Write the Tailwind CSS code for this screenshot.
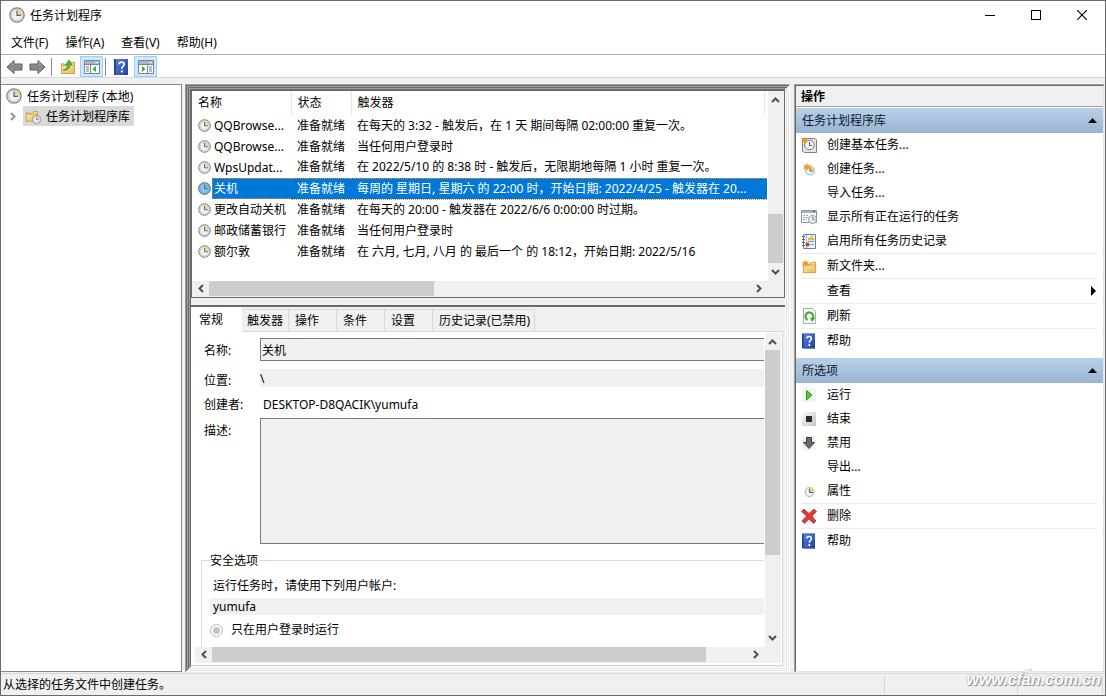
<!DOCTYPE html>
<html lang="zh-CN">
<head>
    <meta charset="UTF-8">
    <meta name="viewport" content="width=device-width, initial-scale=1.0">
    <title>任务计划程序</title>
    <script src="https://cdn.jsdelivr.net/npm/@tailwindcss/browser@4"></script>
</head>
<body class="h-screen overflow-hidden bg-[#f0f0f0] font-['Noto_Sans','Noto_Sans_CJK_SC',sans-serif] text-xs text-black">

    <!-- 公用图标 -->
    <svg class="absolute size-0">
        <defs>
            <linearGradient id="folderFill" x1="0" y1="0" x2="1" y2="1">
                <stop offset="0" stop-color="#fbe9ac"/><stop offset="1" stop-color="#e6b95c"/>
            </linearGradient>
            <linearGradient id="helpFill" x1="0" y1="0" x2="1" y2="1">
                <stop offset="0" stop-color="#5b7fd6"/><stop offset="1" stop-color="#1f3f9e"/>
            </linearGradient>
            <linearGradient id="arrowFill" x1="0" y1="0" x2="0" y2="1">
                <stop offset="0" stop-color="#b0b0b0"/><stop offset="0.5" stop-color="#858585"/><stop offset="1" stop-color="#a0a0a0"/>
            </linearGradient>
            <linearGradient id="stopFill" x1="0" y1="0" x2="1" y2="1">
                <stop offset="0" stop-color="#fafafa"/><stop offset="1" stop-color="#c4c4c4"/>
            </linearGradient>
        </defs>
        <symbol id="clock" viewBox="0 0 16 16">
            <circle cx="8" cy="8" r="7.2" fill="#dcdee0" stroke="#808488" stroke-width="1.2"/>
            <circle cx="8" cy="8" r="5.4" fill="#eef3f7" stroke="#b3b8bd" stroke-width="0.6"/>
            <path d="M8 8V2.600A5.400 5.400 0 0 1 13.400 8z" fill="#f4d48a"/>
            <path d="M8 3.600V8.400H12" fill="none" stroke="#5a6672" stroke-width="1.2"/>
        </symbol>
        <symbol id="back" viewBox="0 0 17 16">
            <path d="M1 8L8 1.500V5H16V11H8V14.500z" fill="url(#arrowFill)" stroke="#5a5a5a" stroke-linejoin="round"/>
        </symbol>
        <symbol id="help" viewBox="0 0 14 16">
            <rect width="14" height="16" fill="#24459f"/>
            <rect x="2" y="0" width="12" height="16" fill="url(#helpFill)"/>
            <path d="M5.200 5.300C5.200 2.400 10.200 2.400 10.200 5.300C10.200 7.200 7.800 7.300 7.800 10" fill="none" stroke="#fff" stroke-width="1.6"/>
            <rect x="6.900" y="11.400" width="2" height="2" fill="#fff"/>
        </symbol>
        <symbol id="folder" viewBox="0 0 16 16">
            <path d="M1.500 4.500V14.500H14.500V3.500H9.500L8.500 5.500H5.500z" fill="#f5dc93" stroke="#c99b43"/>
            <path d="M1.500 6.500H14.500V14.500H1.500z" fill="url(#folderFill)" stroke="#d0a652"/>
        </symbol>
        <symbol id="spark" viewBox="0 0 8 8">
            <path d="M4 0L5 2.400L8 1.400L6.400 4L8 6.400L5.200 5.600L4 8L3 5.600L0 6.400L1.600 4L0 1.400L3 2.400z" fill="#f39a1c"/>
        </symbol>
        <symbol id="up" viewBox="0 0 9 6"><path d="M1 5L4.500 1.500L8 5" fill="none" stroke="#505050" stroke-width="2"/></symbol>
        <symbol id="down" viewBox="0 0 9 6"><path d="M1 1L4.500 4.500L8 1" fill="none" stroke="#505050" stroke-width="2"/></symbol>
        <symbol id="left" viewBox="0 0 6 9"><path d="M5 1L1.500 4.500L5 8" fill="none" stroke="#505050" stroke-width="2"/></symbol>
        <symbol id="right" viewBox="0 0 6 9"><path d="M1 1L4.500 4.500L1 8" fill="none" stroke="#505050" stroke-width="2"/></symbol>
    </svg>

    <div class="flex h-full flex-col border border-[#6b696b]">
        <!-- 标题栏 -->
        <header class="flex h-7 shrink-0 items-center bg-white pl-2">
            <svg class="size-4"><use href="#clock"/></svg>
            <h1 class="ml-1 flex-1 pt-[2px] pl-px">任务计划程序</h1>
            <button aria-label="最小化" class="flex h-7 w-[46px] items-center justify-center">
                <svg class="size-[10px]" viewBox="0 0 10 10"><path d="M0 5.500H10" stroke="#000"/></svg>
            </button>
            <button aria-label="最大化" class="flex h-7 w-[46px] items-center justify-center">
                <svg class="size-[10px]" viewBox="0 0 10 10"><rect x="0.500" y="0.500" width="9" height="9" fill="none" stroke="#000"/></svg>
            </button>
            <button aria-label="关闭" class="flex h-7 w-[46px] items-center justify-center">
                <svg class="size-[10px]" viewBox="0 0 10 10"><path d="M0 0L10 10M10 0L0 10" stroke="#000" stroke-width="1.1"/></svg>
            </button>
        </header>

        <!-- 菜单栏 -->
        <nav class="flex h-[26px] shrink-0 items-center gap-[17px] border-b border-[#b0b0b0] bg-white pt-[2px] pl-[10px]">
            <button>文件(F)</button>
            <button>操作(A)</button>
            <button>查看(V)</button>
            <button>帮助(H)</button>
        </nav>

        <!-- 工具栏 -->
        <div class="flex h-[23px] shrink-0 items-center border-b border-[#d9d9d9] bg-white pt-px pl-[5px]">
            <button aria-label="后退"><svg class="h-4 w-[17px]"><use href="#back"/></svg></button>
            <button aria-label="前进" class="ml-[6px]"><svg class="h-4 w-[17px] -scale-x-100"><use href="#back"/></svg></button>
            <span class="ml-[5px] h-[18px] w-px bg-[#8c8c8c]"></span>
            <button aria-label="向上一级" class="ml-2">
                <svg class="size-4" viewBox="0 0 16 16">
                    <use href="#folder" width="16" height="16"/>
                    <path d="M3 11C6.500 10.500 7.500 8.500 7.500 5.500H5.500L9 1L12 5.500H10C10 9.500 7 12 3 11z" fill="#4cc02f" stroke="#2c8f18" stroke-width="0.6"/>
                </svg>
            </button>
            <button aria-label="显示/隐藏控制台树" aria-pressed="true" class="ml-1 flex h-[21px] w-[23px] items-center justify-center border border-[#99d1ff] bg-[#cce8ff]">
                <svg class="h-[14px] w-4" viewBox="0 0 16 14">
                    <path d="M0.500 0.500H15.500V13.500H0.500z" fill="#fff" stroke="#7b8794"/>
                    <path d="M1 1H15V4H1z" fill="#a9b4c0"/><path d="M0.500 4.500H15.500M6.500 5V13" stroke="#7b8794"/>
                    <path d="M11 2.500H14" stroke="#fff"/>
                    <path d="M2 7H5M2 9H5M2 11H5" stroke="#5c80b5"/>
                    <path d="M12 6V12L8.500 9z" fill="#36b01f"/>
                </svg>
            </button>
            <span class="ml-[2px] h-[18px] w-px bg-[#8c8c8c]"></span>
            <button aria-label="帮助" class="ml-2"><svg class="h-4 w-[14px]"><use href="#help"/></svg></button>
            <button aria-label="显示/隐藏操作窗格" aria-pressed="true" class="ml-[6px] flex h-[21px] w-[23px] items-center justify-center border border-[#99d1ff] bg-[#cce8ff]">
                <svg class="h-[14px] w-4" viewBox="0 0 16 14">
                    <path d="M0.500 0.500H15.500V13.500H0.500z" fill="#fff" stroke="#7b8794"/>
                    <path d="M1 1H15V4H1z" fill="#a9b4c0"/><path d="M0.500 4.500H15.500M9.500 5V13" stroke="#7b8794"/>
                    <path d="M11 2.500H14" stroke="#fff"/>
                    <path d="M11 7H14M11 9H14M11 11H14" stroke="#5c80b5"/>
                    <path d="M4 6V12L7.500 9z" fill="#36b01f"/>
                </svg>
            </button>
        </div>

        <!-- 主区域 -->
        <main class="flex min-h-0 flex-1 pt-[6px] pr-px">
            <!-- 控制台树 -->
            <aside class="w-[181px] shrink-0 border border-l-0 border-[#828790] bg-white pt-px">
                <div class="flex h-5 items-center pl-[5px]">
                    <svg class="size-4"><use href="#clock"/></svg>
                    <span class="ml-[5px] pt-px">任务计划程序 (本地)</span>
                </div>
                <div class="flex h-5 items-center pl-[9px]">
                    <svg class="h-[9px] w-[6px] opacity-60"><use href="#right"/></svg>
                    <a href="#" class="ml-[7px] flex h-5 items-center bg-[#d9d9d9] pr-1 pl-[2px]">
                        <svg class="size-4" viewBox="0 0 16 16">
                            <use href="#folder" width="14" height="15"/>
                            <use href="#clock" x="7" y="7" width="9" height="9"/>
                        </svg>
                        <span class="ml-[5px] pt-px">任务计划程序库</span>
                    </a>
                </div>
            </aside>

            <!-- 中间窗格 -->
            <section class="ml-[3px] flex min-w-0 flex-1 flex-col p-[6px] pr-[5px] shadow-[inset_1px_1px_#a0a0a0,inset_-1px_-1px_#ffffff,inset_2px_2px_#696969,inset_-2px_-2px_#e3e3e3,inset_3px_3px_#a0a0a0,inset_-3px_-3px_#ffffff,inset_4px_4px_#696969,inset_-4px_-4px_#e3e3e3,inset_5px_5px_#a0a0a0,inset_-5px_-5px_#ffffff,inset_6px_6px_#696969]">
                <!-- 任务列表 -->
                <div class="flex h-52 shrink-0 flex-col border border-[#696969] bg-[#f0f0f0]">
                    <div class="flex min-h-0 flex-1">
                        <div class="min-w-0 flex-1 bg-white pr-px">
                            <table class="w-full table-fixed border-collapse text-left">
                                <thead>
                                    <tr class="h-6">
                                        <th class="w-[99px] border-r border-[#e5e5e5] p-0 pl-[6px] font-normal">名称</th>
                                        <th class="w-[60px] border-r border-[#e5e5e5] p-0 pl-[6px] font-normal">状态</th>
                                        <th class="p-0 pl-[6px] font-normal">触发器</th>
                                        <th class="w-[3px] border-l border-[#e5e5e5] p-0"></th>
                                    </tr>
                                </thead>
                                <tbody class="whitespace-nowrap">
                                    <tr class="h-[21px]">
                                        <td class="p-0 pl-[6px]"><span class="flex items-center gap-[3px]"><svg class="size-[13px] shrink-0"><use href="#clock"/></svg>QQBrowse...</span></td>
                                        <td class="p-0 pl-[6px]">准备就绪</td>
                                        <td colspan="2" class="p-0 pl-[6px]">在每天的 3:32 - 触发后，在 1 天 期间每隔 02:00:00 重复一次。</td>
                                    </tr>
                                    <tr class="h-[21px]">
                                        <td class="p-0 pl-[6px]"><span class="flex items-center gap-[3px]"><svg class="size-[13px] shrink-0"><use href="#clock"/></svg>QQBrowse...</span></td>
                                        <td class="p-0 pl-[6px]">准备就绪</td>
                                        <td colspan="2" class="p-0 pl-[6px]">当任何用户登录时</td>
                                    </tr>
                                    <tr class="h-[21px]">
                                        <td class="p-0 pl-[6px]"><span class="flex items-center gap-[3px]"><svg class="size-[13px] shrink-0"><use href="#clock"/></svg>WpsUpdat...</span></td>
                                        <td class="p-0 pl-[6px]">准备就绪</td>
                                        <td colspan="2" class="p-0 pl-[6px]">在 2022/5/10 的 8:38 时 - 触发后，无限期地每隔 1 小时 重复一次。</td>
                                    </tr>
                                    <tr class="h-[21px] text-white" aria-selected="true">
                                        <td class="p-0 pl-[6px]">
                                            <span class="flex items-center gap-px">
                                                <svg class="size-[13px] shrink-0" viewBox="0 0 16 16"><use href="#clock"/><circle cx="8" cy="8" r="8" fill="#0078d7" fill-opacity="0.4"/></svg>
                                                <span class="flex h-[21px] flex-1 items-center border-y border-l border-dotted border-[#ff8728] bg-[#0078d7] pl-px">关机</span>
                                            </span>
                                        </td>
                                        <td class="border-y border-dotted border-[#ff8728] bg-[#0078d7] p-0 pl-[6px]">准备就绪</td>
                                        <td colspan="2" class="border-y border-dotted border-[#ff8728] bg-[#0078d7] p-0 pl-[6px]">每周的 星期日, 星期六 的 22:00 时，开始日期: 2022/4/25 - 触发器在 20...</td>
                                    </tr>
                                    <tr class="h-[21px]">
                                        <td class="p-0 pl-[6px]"><span class="flex items-center gap-[3px]"><svg class="size-[13px] shrink-0"><use href="#clock"/></svg>更改自动关机</span></td>
                                        <td class="p-0 pl-[6px]">准备就绪</td>
                                        <td colspan="2" class="p-0 pl-[6px]">在每天的 20:00 - 触发器在 2022/6/6 0:00:00 时过期。</td>
                                    </tr>
                                    <tr class="h-[21px]">
                                        <td class="p-0 pl-[6px]"><span class="flex items-center gap-[3px]"><svg class="size-[13px] shrink-0"><use href="#clock"/></svg>邮政储蓄银行</span></td>
                                        <td class="p-0 pl-[6px]">准备就绪</td>
                                        <td colspan="2" class="p-0 pl-[6px]">当任何用户登录时</td>
                                    </tr>
                                    <tr class="h-[21px]">
                                        <td class="p-0 pl-[6px]"><span class="flex items-center gap-[3px]"><svg class="size-[13px] shrink-0"><use href="#clock"/></svg>额尔敦</span></td>
                                        <td class="p-0 pl-[6px]">准备就绪</td>
                                        <td colspan="2" class="p-0 pl-[6px]">在 六月, 七月, 八月 的 最后一个 的 18:12，开始日期: 2022/5/16</td>
                                    </tr>
                                </tbody>
                            </table>
                        </div>
                        <div class="flex w-4 shrink-0 flex-col pr-px">
                            <button aria-label="向上滚动" class="flex h-[18px] items-center justify-center"><svg class="h-[6px] w-[9px]"><use href="#up"/></svg></button>
                            <div class="flex flex-1 flex-col justify-end"><div class="h-[49px] bg-[#cdcdcd]"></div></div>
                            <button aria-label="向下滚动" class="flex h-[18px] items-center justify-center"><svg class="h-[6px] w-[9px]"><use href="#down"/></svg></button>
                        </div>
                    </div>
                    <div class="flex h-4 shrink-0 pr-4 pb-px">
                        <button aria-label="向左滚动" class="flex w-[17px] items-center justify-center"><svg class="h-[9px] w-[6px]"><use href="#left"/></svg></button>
                        <div class="flex-1"><div class="h-full w-[225px] bg-[#cdcdcd]"></div></div>
                        <button aria-label="向右滚动" class="flex w-[18px] items-center justify-center"><svg class="h-[9px] w-[6px]"><use href="#right"/></svg></button>
                    </div>
                </div>

                <!-- 任务详情 -->
                <div class="mt-[7px] flex min-h-0 flex-1 flex-col border-t-2 border-[#696969] bg-[#f0f0f0]">
                    <div role="tablist" class="flex h-[25px] shrink-0 items-end border-b border-[#d9d9d9]">
                        <button role="tab" aria-selected="true" class="-mb-px h-[25px] w-[51px] bg-white pr-[10px] pl-2 text-left">常规</button>
                        <button role="tab" class="h-[22px] w-[47px] border-t border-r border-[#d9d9d9] pt-px">触发器</button>
                        <button role="tab" class="h-[22px] w-12 border-t border-r border-[#d9d9d9] pt-px pl-[6px] text-left">操作</button>
                        <button role="tab" class="h-[22px] w-12 border-t border-r border-[#d9d9d9] pt-px pl-[6px] text-left">条件</button>
                        <button role="tab" class="h-[22px] w-12 border-t border-r border-[#d9d9d9] pt-px pl-[6px] text-left">设置</button>
                        <button role="tab" class="h-[22px] border-t border-r border-[#d9d9d9] pt-px pr-1 pl-[6px]">历史记录(已禁用)</button>
                    </div>
                    <div class="mr-[2px] flex min-h-0 flex-1 flex-col border-r border-b border-[#d9d9d9] bg-white pt-px pr-px pb-[2px] pl-[4px]">
                        <div class="flex min-h-0 flex-1">
                            <!-- 常规 -->
                            <form class="min-w-0 flex-1 overflow-hidden pt-[5px]">
                                <div class="grid grid-cols-[56px_1fr] pl-[9px]">
                                    <label for="task-name" class="pt-[5px]">名称:</label>
                                    <input id="task-name" readonly value="关机" class="mb-2 h-[23px] w-full border border-r-0 border-[#7a7a7a] bg-[#f0f0f0] px-px outline-none">
                                    <label for="task-path" class="pt-1">位置:</label>
                                    <input id="task-path" readonly value="\" class="mb-2 h-[18px] w-full bg-[#f0f0f0] outline-none">
                                    <label for="task-author" class="pt-[2px]">创建者:</label>
                                    <input id="task-author" readonly value="DESKTOP-D8QACIK\yumufa" class="mb-[5px] h-[18px] w-full bg-white px-[3px] outline-none">
                                    <label for="task-desc" class="pt-[5px]">描述:</label>
                                    <textarea id="task-desc" readonly class="block h-[126px] w-full resize-none border border-r-0 border-[#7a7a7a] bg-[#f0f0f0] outline-none"></textarea>
                                </div>
                                <fieldset class="mt-[7px] ml-[6px] h-40 border border-r-0 border-[#dcdcdc] pl-2">
                                    <legend class="h-[18px] pt-px pr-[2px] leading-[18px]">安全选项</legend>
                                    <label for="task-user" class="mt-2 block h-[18px] pl-[3px] leading-[18px]">运行任务时，请使用下列用户帐户:</label>
                                    <input id="task-user" readonly value="yumufa" class="mt-[3px] block h-[17px] w-full bg-[#f0f0f0] pl-[3px] outline-none">
                                    <label class="mt-[6px] flex h-[18px] items-center gap-2">
                                        <input type="radio" checked disabled class="size-[13px] appearance-none rounded-full border border-[#c3c3c3] bg-[#c3c3c3] shadow-[inset_0_0_0_2px_#ffffff]">
                                        只在用户登录时运行
                                    </label>
                                </fieldset>
                            </form>
                            <div class="ml-px flex w-4 shrink-0 flex-col bg-[#f0f0f0] pr-px">
                                <button aria-label="向上滚动" class="flex h-[17px] items-center justify-center"><svg class="h-[6px] w-[9px]"><use href="#up"/></svg></button>
                                <div class="flex-1"><div class="h-[205px] bg-[#cdcdcd]"></div></div>
                                <button aria-label="向下滚动" class="flex h-[18px] items-center justify-center"><svg class="h-[6px] w-[9px]"><use href="#down"/></svg></button>
                            </div>
                        </div>
                        <div class="flex h-4 shrink-0 bg-[#f0f0f0] pr-4 pb-px">
                            <button aria-label="向左滚动" class="flex w-[17px] items-center justify-center"><svg class="h-[9px] w-[6px]"><use href="#left"/></svg></button>
                            <div class="flex-1 pr-[41px]"><div class="h-full bg-[#cdcdcd]"></div></div>
                            <button aria-label="向右滚动" class="flex w-[18px] items-center justify-center"><svg class="h-[9px] w-[6px]"><use href="#right"/></svg></button>
                        </div>
                    </div>
                </div>
            </section>

            <!-- 操作窗格 -->
            <aside class="ml-1 w-[310px] shrink-0 border-t border-l border-[#a0a0a0]">
                <div class="h-full border border-t-[#696969] border-r-[#e3e3e3] border-b-[#e3e3e3] border-l-[#696969] bg-white">
                    <h2 class="flex h-[21px] items-center border-b border-[#a0a0a0] bg-[#f0f0f0] pt-px pl-[5px] font-bold">操作</h2>
                    <button class="mt-px flex h-[25px] w-full items-center justify-between bg-linear-to-b from-[#b9d1ea] to-[#99b4d1] px-[6px] text-[#0c1a2b]">
                        任务计划程序库
                        <svg class="h-[5px] w-[9px]" viewBox="0 0 9 5"><path d="M0 5L4.500 0L9 5z" fill="#000"/></svg>
                    </button>
                    <ul class="px-[5px] [&_button]:flex [&_button]:h-6 [&_button]:w-full [&_button]:items-center [&_button]:gap-[10px] [&_svg]:size-4 [&_li]:border-[#ececec]">
                        <li><button>
                            <svg viewBox="0 0 16 16"><path d="M1.500 1.500H14L15.500 3V15.500H3L1.500 14z" fill="#e9e4e0" stroke="#8a7c74"/><circle cx="8.500" cy="8" r="4.800" fill="#eef5fa" stroke="#6f7f8c"/><path d="M8.500 5V8.500H11" fill="none" stroke="#44566a"/><use href="#spark" width="7" height="7"/></svg>
                            创建基本任务...
                        </button></li>
                        <li><button>
                            <svg viewBox="0 0 16 16"><circle cx="9" cy="9.500" r="4.500" fill="#edf4f9" stroke="#9db0c0"/><path d="M9 9.500V5A4.500 4.500 0 0 1 13.500 9.500z" fill="#f5cd78"/><path d="M9 6.500V10H12" fill="none" stroke="#3e5f80"/><use href="#spark" x="2" y="2" width="8" height="8"/></svg>
                            创建任务...
                        </button></li>
                        <li><button><svg></svg>导入任务...</button></li>
                        <li><button>
                            <svg viewBox="0 0 16 16"><path d="M0.500 1.500H15.500V13.500H0.500z" fill="#fff" stroke="#8a949e"/><path d="M1 2H15V4H1z" fill="#a9b4c0"/><path d="M12 2.500H14" stroke="#34506e"/><path d="M2 6.500H8M2 8.500H7M2 10.500H6" stroke="#9aa4ae" stroke-dasharray="2 1"/><use href="#clock" x="7" y="6" width="9" height="9"/></svg>
                            显示所有正在运行的任务
                        </button></li>
                        <li><button>
                            <svg viewBox="0 0 16 16"><path d="M2.500 1.500H14.500V15.500H2.500z" fill="#eef4fb" stroke="#5d83b5"/><path d="M5.500 2V15" stroke="#9cb7d8"/><path d="M7 5.500H13M7 8.500H13M9 11.500H13" stroke="#7f9cc0"/><path d="M1 3.500H4M1 6.500H4M1 9.500H4M1 12.500H4" stroke="#666"/><path d="M10.500 2.500L13.500 7H7.500z" fill="#f6c52b" stroke="#e0a818" stroke-width="0.5"/><circle cx="6.500" cy="11.500" r="2" fill="#d8352a"/></svg>
                            启用所有任务历史记录
                        </button></li>
                        <li class="border-t"><button>
                            <svg viewBox="0 0 16 16"><use href="#folder" x="1" y="1" width="15" height="15"/><use href="#spark" x="1" y="2" width="7" height="7"/></svg>
                            新文件夹...
                        </button></li>
                        <li class="border-t"><button>
                            <svg></svg><span class="flex-1 text-left">查看</span>
                            <svg viewBox="0 0 16 16"><path d="M9 3L14 8L9 13z"/></svg>
                        </button></li>
                        <li class="border-t"><button>
                            <svg viewBox="0 0 16 16"><path d="M2.500 0.500H11.500L14.500 3.500V15.500H2.500z" fill="#f7f9fb" stroke="#a3abb3"/><path d="M6.500 12A4 4 0 1 1 11.500 11" fill="none" stroke="#35ad27" stroke-width="2"/><path d="M9 9.500L14 10L11 14z" fill="#35ad27"/></svg>
                            刷新
                        </button></li>
                        <li class="border-t"><button><svg viewBox="0 0 16 16"><use href="#help" x="1" width="13" height="16"/></svg>帮助</button></li>
                    </ul>
                    <button class="mt-[5px] flex h-[25px] w-full items-center justify-between bg-linear-to-b from-[#b9d1ea] to-[#99b4d1] px-[6px] text-[#0c1a2b]">
                        所选项
                        <svg class="h-[5px] w-[9px]" viewBox="0 0 9 5"><path d="M0 5L4.500 0L9 5z" fill="#000"/></svg>
                    </button>
                    <ul class="px-[5px] [&_button]:flex [&_button]:h-6 [&_button]:w-full [&_button]:items-center [&_button]:gap-[10px] [&_svg]:size-4 [&_li]:border-[#ececec]">
                        <li><button>
                            <svg viewBox="0 0 16 16"><path d="M1 1H15V15H1z" fill="#f4f4f4"/><path d="M5.500 3.500L11 8L5.500 13z" fill="#4fc832" stroke="#2b9a1c"/></svg>
                            运行
                        </button></li>
                        <li><button>
                            <svg viewBox="0 0 16 16"><path d="M1 1H15V15H1z" fill="url(#stopFill)"/><path d="M5 5H11V11H5z" fill="#2b2b2b"/></svg>
                            结束
                        </button></li>
                        <li><button>
                            <svg viewBox="0 0 16 16"><path d="M1 1H15V15H1z" fill="#f4f4f4"/><path d="M5.500 2.500H10.500V7.500H13.500L8 13.500L2.500 7.500H5.500z" fill="#6a6a6a" stroke="#3b3b3b" stroke-linejoin="round"/></svg>
                            禁用
                        </button></li>
                        <li><button><svg></svg>导出...</button></li>
                        <li><button>
                            <svg viewBox="0 0 16 16"><circle cx="8.500" cy="9" r="4.500" fill="#edf4f9" stroke="#9db0c0"/><path d="M8.500 9V4.500A4.500 4.500 0 0 1 13 9z" fill="#f5cd78"/><path d="M8.500 6V9.500H12" fill="none" stroke="#3e5f80"/></svg>
                            属性
                        </button></li>
                        <li class="border-t"><button>
                            <svg viewBox="0 0 16 16"><path d="M3 1L8 5.500L13 1L15.500 3.500L11 8L15 13L12.500 15.500L8 11L3.500 15.500L1 13L5.500 8L0.500 3.500z" fill="#e23a34" stroke="#b32a28" stroke-width="0.700" stroke-linejoin="round"/></svg>
                            删除
                        </button></li>
                        <li class="border-t"><button><svg viewBox="0 0 16 16"><use href="#help" x="1" width="13" height="16"/></svg>帮助</button></li>
                    </ul>
                </div>
            </aside>
        </main>

        <!-- 状态栏 -->
        <footer class="relative mt-px flex h-[22px] shrink-0 items-center border-t border-[#d7d7d7] pl-[2px]">
            <span class="flex-1">从选择的任务文件中创建任务。</span>
            <span class="mr-[2px] h-[19px] w-[219px] border-x border-[#d7d7d7] pl-[132px]"><span class="block h-full w-px bg-[#d7d7d7]"></span></span>
            <!-- 水印 -->
            <span class="absolute right-1 bottom-[5px] font-['Liberation_Sans',sans-serif] text-base leading-5 font-bold text-white italic [text-shadow:1px_1px_1px_#8a8a8a,0_0_2px_#a0a0a0]">www.cfan.com.cn</span>
            <svg class="absolute right-[71px] bottom-[20px] h-2 w-[14px]" viewBox="0 0 14 8"><path d="M2 6C4 3 8 3 12 2C11 5 7 5 2 6z" fill="#fff" stroke="#c4c4c4" stroke-width="0.700"/></svg>
        </footer>
    </div>
</body>
</html>
